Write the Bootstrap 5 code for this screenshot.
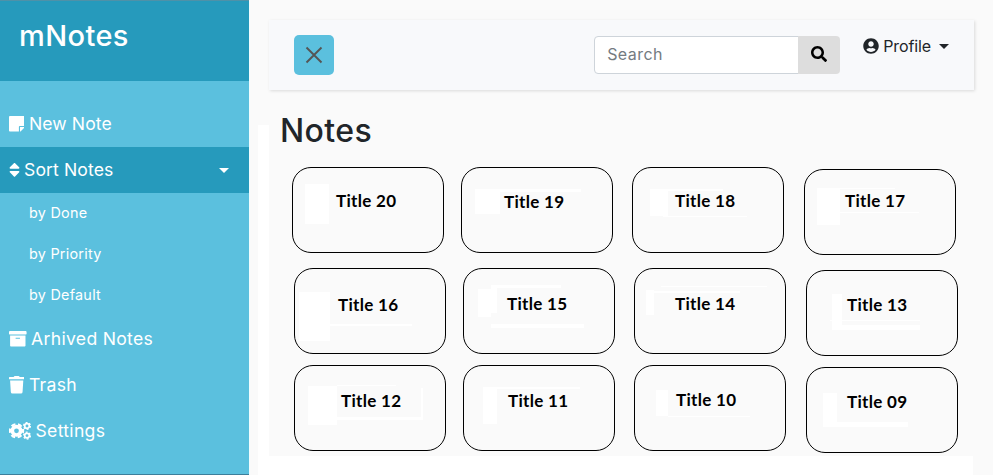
<!DOCTYPE html>
<html lang="en">
<head>
<meta charset="utf-8">
<meta name="viewport" content="width=device-width, initial-scale=1">
<title>mNotes</title>
<link href="https://cdn.jsdelivr.net/npm/bootstrap@5.3.0/dist/css/bootstrap.min.css" rel="stylesheet">
<style>
body{font-family:Inter,"Open Sans",sans-serif;background:#fafafa;height:475px;overflow:hidden}
svg{flex:none;fill:currentColor}
.side{width:249px;flex:none;background:#5bc0de;color:#fff;border-top:1px solid #4f91a8;border-bottom:1px solid #3d7f9b}
.side-head{height:80px;background:#269abc;padding:17px 19px}
.side-head h3{font-size:29px;font-weight:500;letter-spacing:.4px;line-height:36px}
.side-menu{padding-top:20px}
.side a{color:#fff;text-decoration:none;display:flex;align-items:center}
.item{height:46px;padding:0 20px 0 9px;font-size:17.6px;letter-spacing:.1px;gap:4.5px}
.item.open{background:#269abc;gap:4px}
.item.wide{letter-spacing:.3px}
.sub{height:41px;padding:0 0 2px 29px;font-size:14.4px;letter-spacing:.25px}
.caret{margin-left:auto;width:0;border:5.5px solid transparent;border-top-color:currentColor;border-bottom:0}
.main{background:
 linear-gradient(#fff,#fff) 9px 125px/11px 350px no-repeat,
 linear-gradient(#fff,#fff) 9px 456px/715px 19px no-repeat,
 linear-gradient(#f1fdff,#f1fdff) 0 0/1px 100% no-repeat}
.topbar{margin:20px 19px 0 20px;height:70px;padding:15px 25px 0;background:#f8f9fb;box-shadow:1px 1px 3px rgba(0,0,0,.13)}
.close-menu{width:40px;height:40px;background:#5bc0de;color:#555;border-radius:5px;padding:0}
.search{width:246px;height:38px;margin:1px 23px 0 auto}
.search .form-control{font-size:16px;letter-spacing:.45px;border-color:#ced4da;border-radius:4px;padding:5px 12px 7px}
.search .form-control::placeholder{color:#747b81}
.search .btn{width:42px;flex:none;background:#ddd;padding:0 0 2px;border:0;border-radius:4px;color:#000}
.profile{height:22px;font-size:16px;color:#212529;gap:4px;letter-spacing:-.1px}
.profile .caret{margin-left:4px}
.heading{font-size:32px;font-weight:500;line-height:38px;letter-spacing:.4px;margin:22px 0 0 31px}
.notes{display:grid;grid-template-columns:169px 171px 172px 152px;grid-template-rows:101px 97px 86px;margin:17px 0 0 43px}
.note{width:152px;height:86px;border:1px solid #000;border-radius:19px;font:700 17px/20px Lato,"Open Sans",sans-serif;letter-spacing:.3px;color:#000;white-space:nowrap;padding:23px 0 0 43px;background-origin:border-box;background-repeat:no-repeat;--w:linear-gradient(#fff,#fff)}
.note:nth-child(n+5){margin-left:2px}
.note:nth-child(4n){margin-top:2px}
.n20{background-image:var(--w);background-position:13px 17px;background-size:24px 40px}
.n19{padding-top:24px;padding-left:42px;background-image:var(--w),var(--w);background-position:14px 22px,39px 22px;background-size:25px 25px,81px 3px}
.n18{padding-left:42px;background-image:var(--w),var(--w),var(--w);background-position:18px 22px,36px 22px,31px 49px;background-size:18px 27px,55px 2px,84px 1px}
.n17{padding-top:21px;padding-left:40px;background-image:var(--w),var(--w),var(--w);background-position:13px 19px,36px 19px,36px 43px;background-size:23px 37px,55px 1px,79px 1px}
.n16{padding-top:26px;background-image:var(--w),var(--w);background-position:5px 24px,36px 56px;background-size:31px 49px,82px 2px}
.n15{padding-top:25px;background-image:var(--w),var(--w),var(--w),var(--w);background-position:15px 21px,28px 17px,28px 17px,28px 56px;background-size:13px 28px,6px 28px,70px 3px,93px 4px}
.n14{padding-top:25px;padding-left:40px;background-image:var(--w),var(--w),var(--w);background-position:12px 22px,20px 23px,27px 18px;background-size:8px 25px,86px 2px,106px 1px}
.n13{padding-top:24px;padding-left:40px;background-image:var(--w),var(--w),var(--w);background-position:26px 24px,36px 55px,24px 50px;background-size:10px 36px,78px 5px,90px 1px}
.n12{padding-top:25px;padding-left:46px;background-image:var(--w),var(--w),var(--w),var(--w);background-position:14px 21px,43px 20px,127px 23px,43px 52px;background-size:29px 39px,59px 1px,2px 32px,86px 3px}
.n11{padding-top:25px;padding-left:44px;background-image:var(--w),var(--w);background-position:20px 22px,34px 22px;background-size:14px 37px,83px 2px}
.n10{padding-top:24px;padding-left:41px;background-image:var(--w),var(--w);background-position:22px 25px,34px 51px;background-size:12px 26px,82px 1px}
.n09{padding-top:24px;padding-left:40px;background-image:var(--w),var(--w);background-position:17px 26px,31px 55px;background-size:14px 34px,71px 5px}
</style>
<script src="https://cdn.jsdelivr.net/npm/bootstrap@5.3.0/dist/js/bootstrap.bundle.min.js"></script>
</head>
<body class="d-flex">
<nav class="side">
  <div class="side-head"><h3 class="m-0">mNotes</h3></div>
  <div class="side-menu">
    <a class="item" href="#"><svg width="15.4" height="17.6" viewBox="0 0 448 512"><path d="M312 320h136V56c0-13.3-10.7-24-24-24H24C10.7 32 0 42.7 0 56v400c0 13.3 10.7 24 24 24h264V344c0-13.2 10.8-24 24-24zm129 55l-98 98c-4.5 4.5-10.6 7-17 7h-6V352h128v6.1c0 6.3-2.5 12.4-7 16.9z"/></svg>New Note</a>
    <a class="item open" href="#"><svg width="11" height="17.6" viewBox="0 0 320 512"><path d="M41 288h238c21.4 0 32.1 25.9 17 41L177 448c-9.4 9.4-24.6 9.4-33.9 0L24 329c-15.1-15.1-4.4-41 17-41zm255-105L177 64c-9.4-9.4-24.6-9.4-33.9 0L24 183c-15.1 15.1-4.4 41 17 41h238c21.4 0 32.1-25.9 17-41z"/></svg>Sort Notes<i class="caret"></i></a>
    <a class="sub" href="#">by Done</a>
    <a class="sub" href="#">by Priority</a>
    <a class="sub" href="#">by Default</a>
    <a class="item wide" href="#"><svg width="17.6" height="17.6" viewBox="0 0 512 512"><path d="M32 448c0 17.7 14.3 32 32 32h384c17.7 0 32-14.3 32-32V160H32v288zm160-212c0-6.6 5.4-12 12-12h104c6.6 0 12 5.4 12 12v8c0 6.6-5.4 12-12 12H204c-6.6 0-12-5.4-12-12v-8zM480 32H32C14.3 32 0 46.3 0 64v48c0 8.8 7.2 16 16 16h480c8.8 0 16-7.2 16-16V64c0-17.7-14.3-32-32-32z"/></svg>Arhived Notes</a>
    <a class="item wide" href="#"><svg width="15.4" height="17.6" viewBox="0 0 448 512"><path d="M432 32H312l-9.4-18.7A24 24 0 0 0 281.1 0H166.8a23.72 23.72 0 0 0-21.4 13.3L136 32H16A16 16 0 0 0 0 48v32a16 16 0 0 0 16 16h416a16 16 0 0 0 16-16V48a16 16 0 0 0-16-16zM53.2 467a48 48 0 0 0 47.9 45h245.8a48 48 0 0 0 47.9-45L416 128H32z"/></svg>Trash</a>
    <a class="item wide" href="#"><svg width="22" height="17.6" viewBox="0 0 22 17.6" stroke="currentColor"><g fill="none"><circle cx="7.5" cy="8.8" r="4.2" stroke-width="3.6"/><circle cx="7.5" cy="8.8" r="6.6" stroke-width="2.2" stroke-dasharray="4.3 2.611" stroke-dashoffset="2.15"/><circle cx="18" cy="4" r="2.3" stroke-width="1.7"/><circle cx="18" cy="4" r="3.4" stroke-width="1.3" stroke-dasharray="1.9 1.66"/><circle cx="18" cy="13.6" r="2.3" stroke-width="1.7"/><circle cx="18" cy="13.6" r="3.4" stroke-width="1.3" stroke-dasharray="1.9 1.66"/></g></svg>Settings</a>
  </div>
</nav>
<main class="main flex-grow-1">
  <header class="topbar d-flex align-items-start">
    <button class="btn close-menu d-flex align-items-center justify-content-center" type="button" aria-label="Close menu"><svg width="18" height="18" viewBox="0 0 18 18"><path d="M1.5 1.5l15 15M16.5 1.5l-15 15" stroke="currentColor" stroke-width="1.9" fill="none"/></svg></button>
    <div class="input-group search flex-nowrap">
      <input class="form-control" type="text" placeholder="Search">
      <button class="btn d-flex align-items-center justify-content-center" type="button" aria-label="Search"><svg width="16" height="16" viewBox="0 0 512 512"><path d="M505 442.7L405.3 343c-4.5-4.5-10.6-7-17-7H372c27.6-35.3 44-79.7 44-128C416 93.1 322.9 0 208 0S0 93.1 0 208s93.1 208 208 208c48.3 0 92.7-16.4 128-44v16.3c0 6.4 2.5 12.5 7 17l99.7 99.7c9.4 9.4 24.6 9.4 33.9 0l28.3-28.3c9.4-9.4 9.4-24.6.1-34zM208 336c-70.7 0-128-57.2-128-128 0-70.7 57.2-128 128-128 70.7 0 128 57.2 128 128 0 70.7-57.2 128-128 128z"/></svg></button>
    </div>
    <a class="profile d-flex align-items-center text-decoration-none" href="#"><svg width="16" height="16" viewBox="0 0 496 512"><path d="M248 8C111 8 0 119 0 256s111 248 248 248 248-111 248-248S385 8 248 8zm0 96c48.6 0 88 39.4 88 88s-39.4 88-88 88-88-39.4-88-88 39.4-88 88-88zm0 344c-58.7 0-111.3-26.6-146.5-68.2 18.8-35.4 55.6-59.8 98.5-59.8 2.4 0 4.8.4 7.1 1.1 13 4.2 26.6 6.9 40.9 6.9 14.3 0 28-2.7 40.9-6.9 2.3-.7 4.7-1.1 7.1-1.1 42.9 0 79.7 24.4 98.5 59.8C359.3 421.4 306.7 448 248 448z"/></svg>Profile<i class="caret"></i></a>
  </header>
  <h2 class="heading">Notes</h2>
  <section class="notes">
    <div class="note n20">Title 20</div>
    <div class="note n19">Title 19</div>
    <div class="note n18">Title 18</div>
    <div class="note n17">Title 17</div>
    <div class="note n16">Title 16</div>
    <div class="note n15">Title 15</div>
    <div class="note n14">Title 14</div>
    <div class="note n13">Title 13</div>
    <div class="note n12">Title 12</div>
    <div class="note n11">Title 11</div>
    <div class="note n10">Title 10</div>
    <div class="note n09">Title 09</div>
  </section>
</main>
</body>
</html>
